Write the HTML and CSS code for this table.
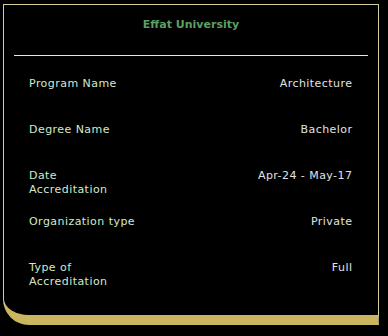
FILE: index.html
```html
<!DOCTYPE html>
<html>
<head>
<meta charset="utf-8">
<link rel="stylesheet" href="styles.css">
</head>
<body>
<div class="card">
  <h1 class="title">Effat University</h1>
  <hr class="divider">
  <div class="rows">
    <div class="row"><span class="label">Program Name</span><span class="value">Architecture</span></div>
    <div class="row"><span class="label">Degree Name</span><span class="value">Bachelor</span></div>
    <div class="row"><span class="label">Date<br>Accreditation</span><span class="value">Apr-24 - May-17</span></div>
    <div class="row"><span class="label">Organization type</span><span class="value">Private</span></div>
    <div class="row"><span class="label">Type of<br>Accreditation</span><span class="value">Full</span></div>
  </div>
</div>
</body>
</html>
```
FILE: styles.css
```css
html, body {
  margin: 0;
  padding: 0;
  background: #000;
}
body {
  width: 388px;
  height: 336px;
  overflow: hidden;
  font-family: "DejaVu Sans", Verdana, sans-serif;
}
.card {
  box-sizing: border-box;
  margin: 4px 0 0 3px;
  width: 376px;
  height: 321px;
  border: 1px solid #d6cc9c;
  border-bottom: 10px solid #cbb660;
  border-bottom-left-radius: 26px;
  background: #000;
  display: flex;
  flex-direction: column;
}
.title {
  margin: 12px 0 0;
  font-size: 11px;
  line-height: 16px;
  font-weight: bold;
  text-align: center;
  color: #5d9f62;
}
.divider {
  margin: 22px 10px 0 10px;
  border: 0;
  height: 1px;
  background: #e8e8e0;
}
.rows {
  margin-top: 21px;
  padding: 0 26px 0 25px;
  display: flex;
  flex-direction: column;
}
.row {
  height: 46px;
  display: flex;
  justify-content: space-between;
  align-items: flex-start;
  font-size: 11px;
  line-height: 14px;
  letter-spacing: 0.45px;
}
.label {
  color: #d0eacd;
}
.value {
  color: #e2e2e2;
  text-align: right;
  margin-right: -0.45px;
}
```
